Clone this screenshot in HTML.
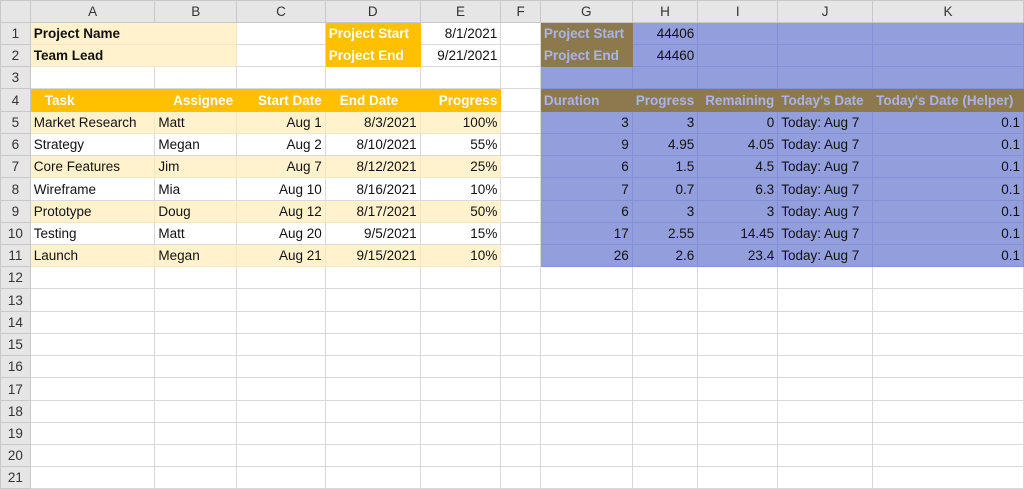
<!DOCTYPE html><html><head><style>
body{margin:0;background:#fff;font-family:"Liberation Sans",sans-serif;font-size:13.5px;color:#111}
table{border-collapse:collapse;table-layout:fixed;position:absolute;left:0;top:0}
td{border:1px solid #d9d9d9;padding:0 3px;white-space:nowrap;overflow:hidden;height:21px;line-height:21px}
tr.h td{background:#e6e6e6;text-align:center;color:#333;border-color:#c8c8c8;height:21px}
td.r0{background:#e6e6e6;text-align:center;color:#333;border-color:#c8c8c8;padding:0}
.y{background:#fff2cc;border-color:#f2e6c4}.o{background:#ffc000;color:#fff;font-weight:bold;border-color:#ffc000}
.b{font-weight:bold}.rt{text-align:right}
.bl{background:#939fdd;border-color:#8390d4}
.br{background:#8c7a4e;color:#aab4ea;font-weight:bold;border-color:#8c7a4e}
tr.t td{height:22px}
</style></head><body>
<table>
<colgroup><col style="width:30px"><col style="width:125px"><col style="width:82px"><col style="width:89px"><col style="width:95px"><col style="width:81px"><col style="width:40px"><col style="width:92px"><col style="width:64px"><col style="width:80px"><col style="width:95px"><col style="width:151px"></colgroup>
<tr class="h"><td></td><td>A</td><td>B</td><td>C</td><td>D</td><td>E</td><td>F</td><td>G</td><td>H</td><td>I</td><td>J</td><td>K</td></tr>
<tr><td class="r0">1</td><td class="y b" colspan="2">Project Name</td><td></td><td class="o">Project Start</td><td class="rt">8/1/2021</td><td></td><td class="br">Project Start</td><td class="bl rt">44406</td><td class="bl"></td><td class="bl"></td><td class="bl"></td></tr>
<tr><td class="r0">2</td><td class="y b" colspan="2">Team Lead</td><td></td><td class="o">Project End</td><td class="rt">9/21/2021</td><td></td><td class="br">Project End</td><td class="bl rt">44460</td><td class="bl"></td><td class="bl"></td><td class="bl"></td></tr>
<tr><td class="r0">3</td><td></td><td></td><td></td><td></td><td></td><td></td><td class="bl"></td><td class="bl"></td><td class="bl"></td><td class="bl"></td><td class="bl"></td></tr>
<tr class="t"><td class="r0">4</td><td class="o" style="padding-left:14px">Task</td><td class="o rt">Assignee</td><td class="o rt">Start Date</td><td class="o" style="padding-left:14px">End Date</td><td class="o rt">Progress</td><td></td><td class="br">Duration</td><td class="br rt">Progress</td><td class="br rt">Remaining</td><td class="br">Today's Date</td><td class="br">Today's Date (Helper)</td></tr>
<tr><td class="r0">5</td><td class="y">Market Research</td><td class="y">Matt</td><td class="y rt">Aug 1</td><td class="y rt">8/3/2021</td><td class="y rt">100%</td><td></td><td class="bl rt">3</td><td class="bl rt">3</td><td class="bl rt">0</td><td class="bl">Today: Aug 7</td><td class="bl rt">0.1</td></tr>
<tr><td class="r0">6</td><td>Strategy</td><td>Megan</td><td class="rt">Aug 2</td><td class="rt">8/10/2021</td><td class="rt">55%</td><td></td><td class="bl rt">9</td><td class="bl rt">4.95</td><td class="bl rt">4.05</td><td class="bl">Today: Aug 7</td><td class="bl rt">0.1</td></tr>
<tr><td class="r0">7</td><td class="y">Core Features</td><td class="y">Jim</td><td class="y rt">Aug 7</td><td class="y rt">8/12/2021</td><td class="y rt">25%</td><td></td><td class="bl rt">6</td><td class="bl rt">1.5</td><td class="bl rt">4.5</td><td class="bl">Today: Aug 7</td><td class="bl rt">0.1</td></tr>
<tr class="t"><td class="r0">8</td><td>Wireframe</td><td>Mia</td><td class="rt">Aug 10</td><td class="rt">8/16/2021</td><td class="rt">10%</td><td></td><td class="bl rt">7</td><td class="bl rt">0.7</td><td class="bl rt">6.3</td><td class="bl">Today: Aug 7</td><td class="bl rt">0.1</td></tr>
<tr><td class="r0">9</td><td class="y">Prototype</td><td class="y">Doug</td><td class="y rt">Aug 12</td><td class="y rt">8/17/2021</td><td class="y rt">50%</td><td></td><td class="bl rt">6</td><td class="bl rt">3</td><td class="bl rt">3</td><td class="bl">Today: Aug 7</td><td class="bl rt">0.1</td></tr>
<tr><td class="r0">10</td><td>Testing</td><td>Matt</td><td class="rt">Aug 20</td><td class="rt">9/5/2021</td><td class="rt">15%</td><td></td><td class="bl rt">17</td><td class="bl rt">2.55</td><td class="bl rt">14.45</td><td class="bl">Today: Aug 7</td><td class="bl rt">0.1</td></tr>
<tr><td class="r0">11</td><td class="y">Launch</td><td class="y">Megan</td><td class="y rt">Aug 21</td><td class="y rt">9/15/2021</td><td class="y rt">10%</td><td></td><td class="bl rt">26</td><td class="bl rt">2.6</td><td class="bl rt">23.4</td><td class="bl">Today: Aug 7</td><td class="bl rt">0.1</td></tr>
<tr><td class="r0">12</td><td></td><td></td><td></td><td></td><td></td><td></td><td></td><td></td><td></td><td></td><td></td></tr>
<tr class="t"><td class="r0">13</td><td></td><td></td><td></td><td></td><td></td><td></td><td></td><td></td><td></td><td></td><td></td></tr>
<tr><td class="r0">14</td><td></td><td></td><td></td><td></td><td></td><td></td><td></td><td></td><td></td><td></td><td></td></tr>
<tr><td class="r0">15</td><td></td><td></td><td></td><td></td><td></td><td></td><td></td><td></td><td></td><td></td><td></td></tr>
<tr><td class="r0">16</td><td></td><td></td><td></td><td></td><td></td><td></td><td></td><td></td><td></td><td></td><td></td></tr>
<tr class="t"><td class="r0">17</td><td></td><td></td><td></td><td></td><td></td><td></td><td></td><td></td><td></td><td></td><td></td></tr>
<tr><td class="r0">18</td><td></td><td></td><td></td><td></td><td></td><td></td><td></td><td></td><td></td><td></td><td></td></tr>
<tr><td class="r0">19</td><td></td><td></td><td></td><td></td><td></td><td></td><td></td><td></td><td></td><td></td><td></td></tr>
<tr><td class="r0">20</td><td></td><td></td><td></td><td></td><td></td><td></td><td></td><td></td><td></td><td></td><td></td></tr>
<tr><td class="r0">21</td><td></td><td></td><td></td><td></td><td></td><td></td><td></td><td></td><td></td><td></td><td></td></tr>
</table>
</body></html>
